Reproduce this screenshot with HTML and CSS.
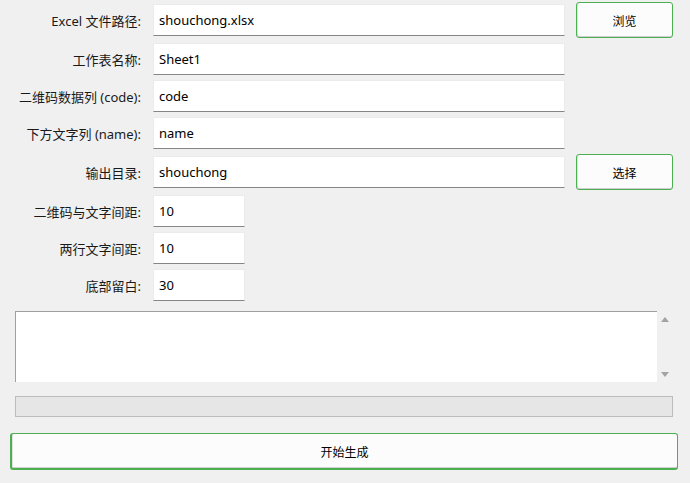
FILE: index.html
```html
<!DOCTYPE html>
<html lang="zh">
<head>
<meta charset="utf-8">
<link rel="stylesheet" href="styles.css">
</head>
<body>
<div class="app">
  <div class="form">
    <div class="row tall">
      <label class="lbl">Excel 文件路径:</label>
      <div class="field wide">shouchong.xlsx</div>
      <button class="btn side">浏览</button>
    </div>
    <div class="row">
      <label class="lbl">工作表名称:</label>
      <div class="field wide">Sheet1</div>
    </div>
    <div class="row">
      <label class="lbl">二维码数据列 (code):</label>
      <div class="field wide">code</div>
    </div>
    <div class="row">
      <label class="lbl">下方文字列 (name):</label>
      <div class="field wide">name</div>
    </div>
    <div class="row tall">
      <label class="lbl">输出目录:</label>
      <div class="field wide">shouchong</div>
      <button class="btn side">选择</button>
    </div>
    <div class="row">
      <label class="lbl">二维码与文字间距:</label>
      <div class="field short">10</div>
    </div>
    <div class="row">
      <label class="lbl">两行文字间距:</label>
      <div class="field short">10</div>
    </div>
    <div class="row">
      <label class="lbl">底部留白:</label>
      <div class="field short">30</div>
    </div>
  </div>
  <div class="log">
    <div class="log-box"></div>
    <div class="scroll">
      <span class="arrow up"></span>
      <span class="arrow down"></span>
    </div>
  </div>
  <div class="progress"></div>
  <button class="btn start">开始生成</button>
</div>
</body>
</html>
```
FILE: styles.css
```css
html, body {
  margin: 0;
  padding: 0;
  background: #f0f0f0;
}
body {
  width: 690px;
  height: 483px;
  overflow: hidden;
  font-family: "Noto Sans", "Noto Sans CJK SC", sans-serif;
  font-size: 13px;
  color: #000;
}
.app {
  display: flex;
  flex-direction: column;
}
.form {
  display: flex;
  flex-direction: column;
  row-gap: 5px;
  padding-top: 2px;
}
.row {
  display: flex;
  align-items: center;
  height: 32px;
}
.row.tall {
  height: 36px;
}
.lbl {
  width: 141px;
  text-align: right;
  flex: none;
  color: #1a1a1a;
}
.field {
  box-sizing: border-box;
  height: 32px;
  margin-left: 12px;
  background: #fff;
  border: 1px solid #ebebeb;
  border-bottom: 1px solid #868686;
  padding-left: 5px;
  display: flex;
  align-items: center;
  flex: none;
}
.field.wide { width: 412px; }
.field.short { width: 92px; }
.btn {
  box-sizing: border-box;
  font-family: "Noto Sans CJK SC", "Noto Sans", sans-serif;
  font-size: 12px;
  color: #000;
  background: #fcfcfc;
  border: 1px solid #4caf50;
  border-radius: 3px;
  box-shadow: inset 0 -1px 0 #cfcfcf, inset 1px 0 0 #e0e0e0;
  padding: 0;
}
.btn.side {
  width: 97px;
  height: 36px;
  margin-left: 11px;
}
.log {
  display: flex;
  margin-top: 10px;
  margin-left: 15px;
  height: 71px;
}
.log-box {
  width: 642px;
  height: 71px;
  box-sizing: border-box;
  background: #fff;
  border-top: 1px solid #a0a0a0;
  border-left: 1px solid #a0a0a0;
}
.scroll {
  width: 16px;
  display: flex;
  flex-direction: column;
  justify-content: space-between;
  align-items: center;
  padding: 6px 0 5px;
  box-sizing: border-box;
}
.arrow {
  width: 0;
  height: 0;
  border-left: 4px solid transparent;
  border-right: 4px solid transparent;
}
.arrow.up { border-bottom: 5px solid #a3a3a3; }
.arrow.down { border-top: 5px solid #a3a3a3; }
.progress {
  margin-top: 14px;
  margin-left: 15px;
  width: 658px;
  height: 21px;
  box-sizing: border-box;
  background: #e6e6e6;
  border: 1px solid #bcbcbc;
}
.btn.start {
  margin-top: 16px;
  margin-left: 10px;
  width: 668px;
  height: 37px;
  border-width: 1px 1px 2px 2px;
}
```
